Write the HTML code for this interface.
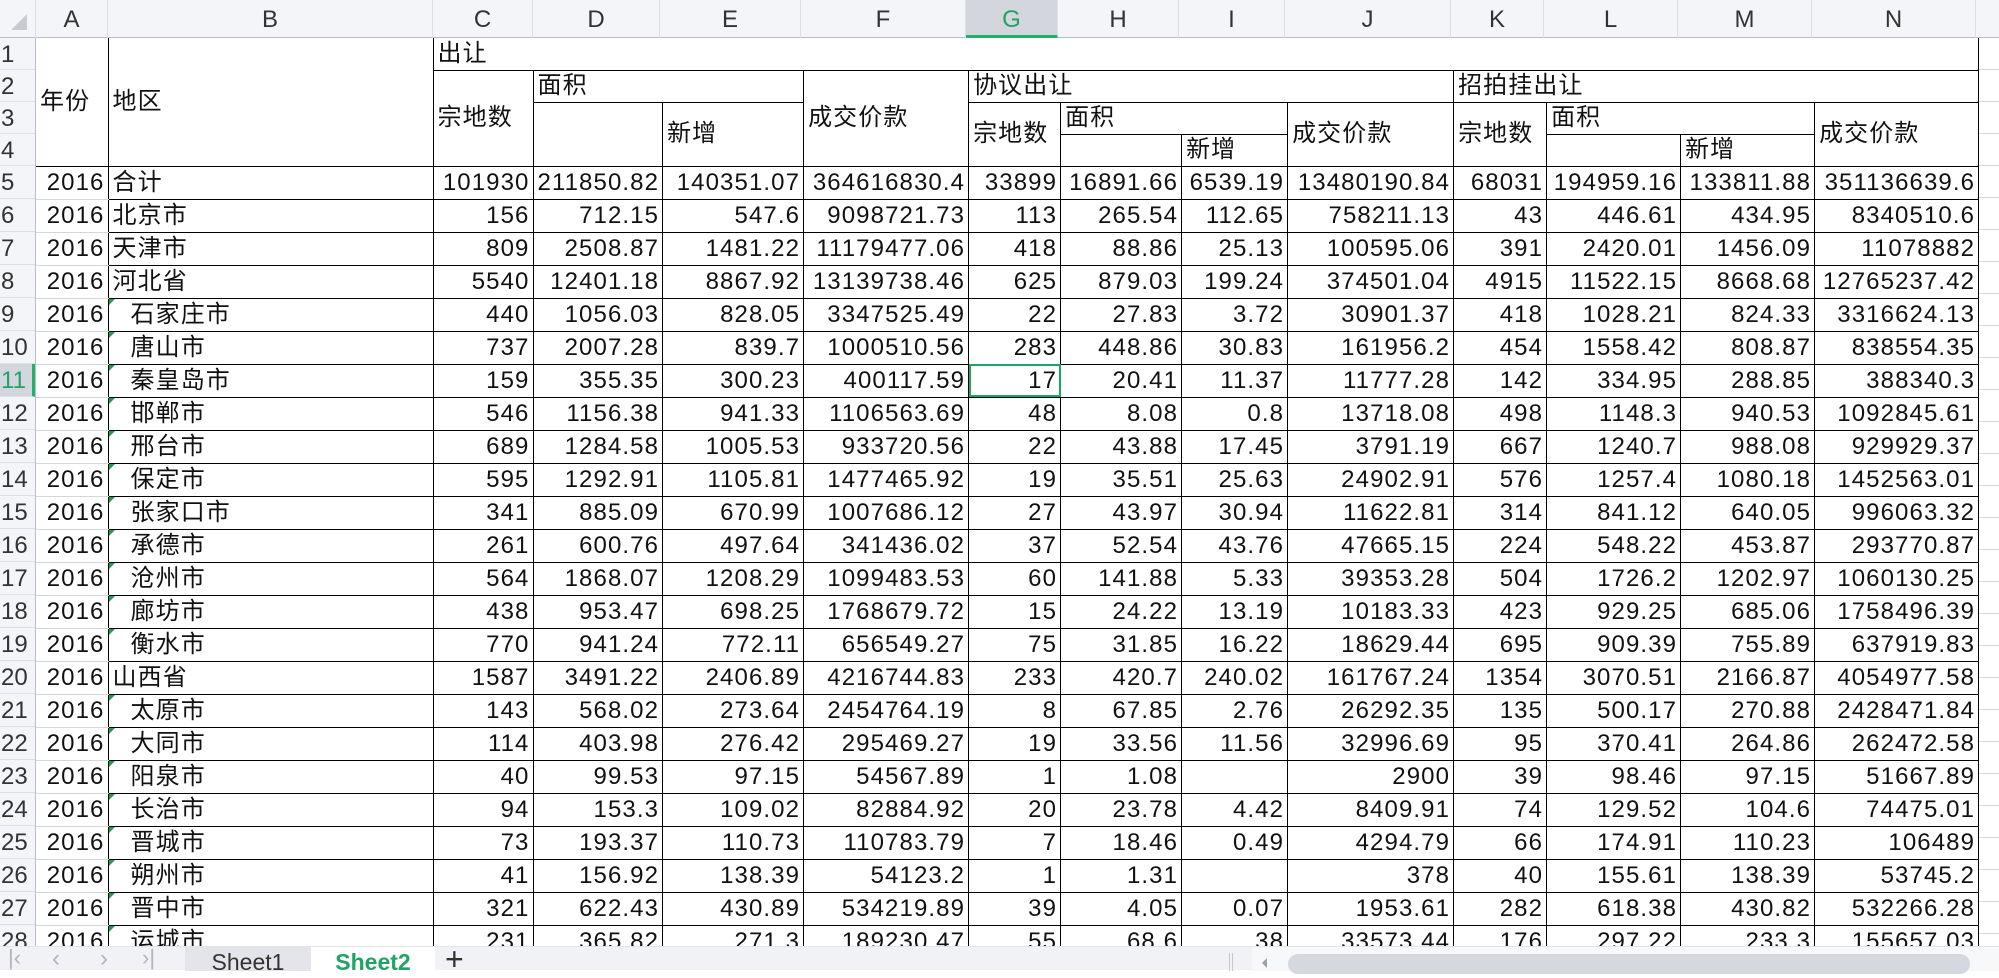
<!DOCTYPE html>
<html><head><meta charset="utf-8"><style>
*{margin:0;padding:0;box-sizing:border-box}
body{width:1999px;height:970px;overflow:hidden;background:#fff;position:relative;font-family:"Liberation Sans","Noto Sans CJK SC",sans-serif;color:#111}
.colhdr{position:absolute;left:0;top:0;width:1999px;height:38px;background:#f4f5f8;border-bottom:1px solid #b9bccb}
.colhdr div{position:absolute;top:0;height:38px;line-height:40px;text-align:center;font-size:24px;color:#333;border-right:1px solid #dcdfe6}
.rowhdr{position:absolute;left:0;top:38px;width:36px;height:908px;background:#f4f5f8;border-right:1px solid #b9bccb}
.rowhdr div{position:absolute;left:0;width:35px;font-size:24px;color:#333;border-bottom:1px solid #dcdfe6;padding-left:1px;overflow:hidden;white-space:nowrap}
table{position:absolute;left:36px;top:38px;border-collapse:collapse;table-layout:fixed;font-size:24px;letter-spacing:1.1px}
td{border:1px solid #000;padding:0 3px 0 4px;white-space:nowrap;overflow:hidden;height:33px;line-height:30px;text-align:right}
tr.h td{height:32px;text-align:left;vertical-align:middle}
td.a{border-left:none;border-top:1px solid #d4d6dd;border-bottom:1px solid #d4d6dd}
td.t{text-align:left;position:relative}
td.c{text-align:left;padding-left:22px;position:relative}
td.c::before{content:"";position:absolute;left:0;top:0;border-top:6px solid #1e9e50;border-right:6px solid transparent}
.grid{position:absolute;left:1977px;top:38px;width:22px;height:908px;background:repeating-linear-gradient(#fff 0 31px,#d4d8e2 31px 32px)}
.tabs{position:absolute;left:0;top:946px;width:1999px;height:24px;background:#f1f2f5;border-top:1px solid #e2e4e8;font-size:23px}
.tabs span{position:absolute}
</style></head><body>
<div class="colhdr">
<div style="left:0;width:36px"><svg width="20" height="20" style="position:absolute;left:9px;top:12px"><path d="M2 18H18V2Z" fill="#c8cbd0"/></svg></div>
<div style="left:36px;width:72px">A</div>
<div style="left:108px;width:325px">B</div>
<div style="left:433px;width:100px">C</div>
<div style="left:533px;width:127px">D</div>
<div style="left:660px;width:141px">E</div>
<div style="left:801px;width:165px">F</div>
<div style="left:966px;width:92px;background:#d3d6dd;color:#1fa463;border-bottom:3px solid #1fb36a">G</div>
<div style="left:1058px;width:121px">H</div>
<div style="left:1179px;width:106px">I</div>
<div style="left:1285px;width:166px">J</div>
<div style="left:1451px;width:93px">K</div>
<div style="left:1544px;width:134px">L</div>
<div style="left:1678px;width:134px">M</div>
<div style="left:1812px;width:164px">N</div>
</div>
<div class="rowhdr">
<div style="top:0;height:32px;line-height:34px">1</div>
<div style="top:32px;height:32px;line-height:34px">2</div>
<div style="top:64px;height:32px;line-height:34px">3</div>
<div style="top:96px;height:32px;line-height:34px">4</div>
<div style="top:128px;height:33px;line-height:34px">5</div>
<div style="top:161px;height:33px;line-height:34px">6</div>
<div style="top:194px;height:33px;line-height:34px">7</div>
<div style="top:227px;height:33px;line-height:34px">8</div>
<div style="top:260px;height:33px;line-height:34px">9</div>
<div style="top:293px;height:33px;line-height:34px">10</div>
<div style="top:326px;height:33px;line-height:34px;background:#d3d6dd;color:#1fa463;border-right:3px solid #1fb36a">11</div>
<div style="top:359px;height:33px;line-height:34px">12</div>
<div style="top:392px;height:33px;line-height:34px">13</div>
<div style="top:425px;height:33px;line-height:34px">14</div>
<div style="top:458px;height:33px;line-height:34px">15</div>
<div style="top:491px;height:33px;line-height:34px">16</div>
<div style="top:524px;height:33px;line-height:34px">17</div>
<div style="top:557px;height:33px;line-height:34px">18</div>
<div style="top:590px;height:33px;line-height:34px">19</div>
<div style="top:623px;height:33px;line-height:34px">20</div>
<div style="top:656px;height:33px;line-height:34px">21</div>
<div style="top:689px;height:33px;line-height:34px">22</div>
<div style="top:722px;height:33px;line-height:34px">23</div>
<div style="top:755px;height:33px;line-height:34px">24</div>
<div style="top:788px;height:33px;line-height:34px">25</div>
<div style="top:821px;height:33px;line-height:34px">26</div>
<div style="top:854px;height:33px;line-height:34px">27</div>
<div style="top:887px;height:33px;line-height:34px">28</div>
</div>
<div class="grid"></div>
<table>
<colgroup><col style="width:72px"><col style="width:325px"><col style="width:100px"><col style="width:127px"><col style="width:141px"><col style="width:165px"><col style="width:92px"><col style="width:121px"><col style="width:106px"><col style="width:166px"><col style="width:93px"><col style="width:134px"><col style="width:134px"><col style="width:164px"></colgroup>
<tr class="h"><td rowspan="4" style="border-left:none;border-top:none">年份</td><td rowspan="4" style="border-top:none">地区</td><td colspan="12" style="border-top:none">出让</td></tr>
<tr class="h"><td rowspan="3">宗地数</td><td colspan="2">面积</td><td rowspan="3">成交价款</td><td colspan="4">协议出让</td><td colspan="4">招拍挂出让</td></tr>
<tr class="h"><td rowspan="2"></td><td rowspan="2">新增</td><td rowspan="2">宗地数</td><td colspan="2">面积</td><td rowspan="2">成交价款</td><td rowspan="2">宗地数</td><td colspan="2">面积</td><td rowspan="2">成交价款</td></tr>
<tr class="h"><td></td><td>新增</td><td></td><td>新增</td></tr>
<tr><td class="a">2016</td><td class="t">合计</td><td>101930</td><td>211850.82</td><td>140351.07</td><td>364616830.4</td><td>33899</td><td>16891.66</td><td>6539.19</td><td>13480190.84</td><td>68031</td><td>194959.16</td><td>133811.88</td><td>351136639.6</td></tr>
<tr><td class="a">2016</td><td class="t">北京市</td><td>156</td><td>712.15</td><td>547.6</td><td>9098721.73</td><td>113</td><td>265.54</td><td>112.65</td><td>758211.13</td><td>43</td><td>446.61</td><td>434.95</td><td>8340510.6</td></tr>
<tr><td class="a">2016</td><td class="t">天津市</td><td>809</td><td>2508.87</td><td>1481.22</td><td>11179477.06</td><td>418</td><td>88.86</td><td>25.13</td><td>100595.06</td><td>391</td><td>2420.01</td><td>1456.09</td><td>11078882</td></tr>
<tr><td class="a">2016</td><td class="t">河北省</td><td>5540</td><td>12401.18</td><td>8867.92</td><td>13139738.46</td><td>625</td><td>879.03</td><td>199.24</td><td>374501.04</td><td>4915</td><td>11522.15</td><td>8668.68</td><td>12765237.42</td></tr>
<tr><td class="a">2016</td><td class="c">石家庄市</td><td>440</td><td>1056.03</td><td>828.05</td><td>3347525.49</td><td>22</td><td>27.83</td><td>3.72</td><td>30901.37</td><td>418</td><td>1028.21</td><td>824.33</td><td>3316624.13</td></tr>
<tr><td class="a">2016</td><td class="c">唐山市</td><td>737</td><td>2007.28</td><td>839.7</td><td>1000510.56</td><td>283</td><td>448.86</td><td>30.83</td><td>161956.2</td><td>454</td><td>1558.42</td><td>808.87</td><td>838554.35</td></tr>
<tr><td class="a">2016</td><td class="c">秦皇岛市</td><td>159</td><td>355.35</td><td>300.23</td><td>400117.59</td><td style="outline:2px solid #1fa463;outline-offset:-2px">17</td><td>20.41</td><td>11.37</td><td>11777.28</td><td>142</td><td>334.95</td><td>288.85</td><td>388340.3</td></tr>
<tr><td class="a">2016</td><td class="c">邯郸市</td><td>546</td><td>1156.38</td><td>941.33</td><td>1106563.69</td><td>48</td><td>8.08</td><td>0.8</td><td>13718.08</td><td>498</td><td>1148.3</td><td>940.53</td><td>1092845.61</td></tr>
<tr><td class="a">2016</td><td class="c">邢台市</td><td>689</td><td>1284.58</td><td>1005.53</td><td>933720.56</td><td>22</td><td>43.88</td><td>17.45</td><td>3791.19</td><td>667</td><td>1240.7</td><td>988.08</td><td>929929.37</td></tr>
<tr><td class="a">2016</td><td class="c">保定市</td><td>595</td><td>1292.91</td><td>1105.81</td><td>1477465.92</td><td>19</td><td>35.51</td><td>25.63</td><td>24902.91</td><td>576</td><td>1257.4</td><td>1080.18</td><td>1452563.01</td></tr>
<tr><td class="a">2016</td><td class="c">张家口市</td><td>341</td><td>885.09</td><td>670.99</td><td>1007686.12</td><td>27</td><td>43.97</td><td>30.94</td><td>11622.81</td><td>314</td><td>841.12</td><td>640.05</td><td>996063.32</td></tr>
<tr><td class="a">2016</td><td class="c">承德市</td><td>261</td><td>600.76</td><td>497.64</td><td>341436.02</td><td>37</td><td>52.54</td><td>43.76</td><td>47665.15</td><td>224</td><td>548.22</td><td>453.87</td><td>293770.87</td></tr>
<tr><td class="a">2016</td><td class="c">沧州市</td><td>564</td><td>1868.07</td><td>1208.29</td><td>1099483.53</td><td>60</td><td>141.88</td><td>5.33</td><td>39353.28</td><td>504</td><td>1726.2</td><td>1202.97</td><td>1060130.25</td></tr>
<tr><td class="a">2016</td><td class="c">廊坊市</td><td>438</td><td>953.47</td><td>698.25</td><td>1768679.72</td><td>15</td><td>24.22</td><td>13.19</td><td>10183.33</td><td>423</td><td>929.25</td><td>685.06</td><td>1758496.39</td></tr>
<tr><td class="a">2016</td><td class="c">衡水市</td><td>770</td><td>941.24</td><td>772.11</td><td>656549.27</td><td>75</td><td>31.85</td><td>16.22</td><td>18629.44</td><td>695</td><td>909.39</td><td>755.89</td><td>637919.83</td></tr>
<tr><td class="a">2016</td><td class="t">山西省</td><td>1587</td><td>3491.22</td><td>2406.89</td><td>4216744.83</td><td>233</td><td>420.7</td><td>240.02</td><td>161767.24</td><td>1354</td><td>3070.51</td><td>2166.87</td><td>4054977.58</td></tr>
<tr><td class="a">2016</td><td class="c">太原市</td><td>143</td><td>568.02</td><td>273.64</td><td>2454764.19</td><td>8</td><td>67.85</td><td>2.76</td><td>26292.35</td><td>135</td><td>500.17</td><td>270.88</td><td>2428471.84</td></tr>
<tr><td class="a">2016</td><td class="c">大同市</td><td>114</td><td>403.98</td><td>276.42</td><td>295469.27</td><td>19</td><td>33.56</td><td>11.56</td><td>32996.69</td><td>95</td><td>370.41</td><td>264.86</td><td>262472.58</td></tr>
<tr><td class="a">2016</td><td class="c">阳泉市</td><td>40</td><td>99.53</td><td>97.15</td><td>54567.89</td><td>1</td><td>1.08</td><td></td><td>2900</td><td>39</td><td>98.46</td><td>97.15</td><td>51667.89</td></tr>
<tr><td class="a">2016</td><td class="c">长治市</td><td>94</td><td>153.3</td><td>109.02</td><td>82884.92</td><td>20</td><td>23.78</td><td>4.42</td><td>8409.91</td><td>74</td><td>129.52</td><td>104.6</td><td>74475.01</td></tr>
<tr><td class="a">2016</td><td class="c">晋城市</td><td>73</td><td>193.37</td><td>110.73</td><td>110783.79</td><td>7</td><td>18.46</td><td>0.49</td><td>4294.79</td><td>66</td><td>174.91</td><td>110.23</td><td>106489</td></tr>
<tr><td class="a">2016</td><td class="c">朔州市</td><td>41</td><td>156.92</td><td>138.39</td><td>54123.2</td><td>1</td><td>1.31</td><td></td><td>378</td><td>40</td><td>155.61</td><td>138.39</td><td>53745.2</td></tr>
<tr><td class="a">2016</td><td class="c">晋中市</td><td>321</td><td>622.43</td><td>430.89</td><td>534219.89</td><td>39</td><td>4.05</td><td>0.07</td><td>1953.61</td><td>282</td><td>618.38</td><td>430.82</td><td>532266.28</td></tr>
<tr><td class="a">2016</td><td class="c">运城市</td><td>231</td><td>365.82</td><td>271.3</td><td>189230.47</td><td>55</td><td>68.6</td><td>38</td><td>33573.44</td><td>176</td><td>297.22</td><td>233.3</td><td>155657.03</td></tr>
</table>
<div class="tabs">
<span style="left:8px;top:-2px;color:#b0b4bc;font-size:22px">|&lsaquo;</span>
<span style="left:52px;top:-2px;color:#b0b4bc;font-size:24px">&lsaquo;</span>
<span style="left:100px;top:-2px;color:#b0b4bc;font-size:24px">&rsaquo;</span>
<span style="left:142px;top:-2px;color:#b0b4bc;font-size:22px">&rsaquo;|</span>
<span style="left:185px;top:0;width:126px;height:24px;background:#e3e5ea;color:#333;text-align:center;line-height:30px">Sheet1</span>
<span style="left:311px;top:0;width:124px;height:24px;background:#fff;color:#1fa463;font-weight:bold;text-align:center;line-height:30px">Sheet2</span>
<span style="left:445px;top:-6px;color:#333;font-size:32px">+</span>
<span style="left:1229px;top:6px;width:1px;height:18px;background:#c5c8ce"></span>
<span style="left:1232px;top:6px;width:1px;height:18px;background:#c5c8ce"></span>
<span style="left:1252px;top:0;width:747px;height:24px;background:#f7f8fa"></span>
<span style="left:1262px;top:11px;border-right:5px solid #9aa0aa;border-top:5px solid transparent;border-bottom:5px solid transparent"></span>
<span style="left:1288px;top:7px;width:682px;height:20px;background:#d5d8df;border-radius:10px"></span>
</div>
</body></html>
